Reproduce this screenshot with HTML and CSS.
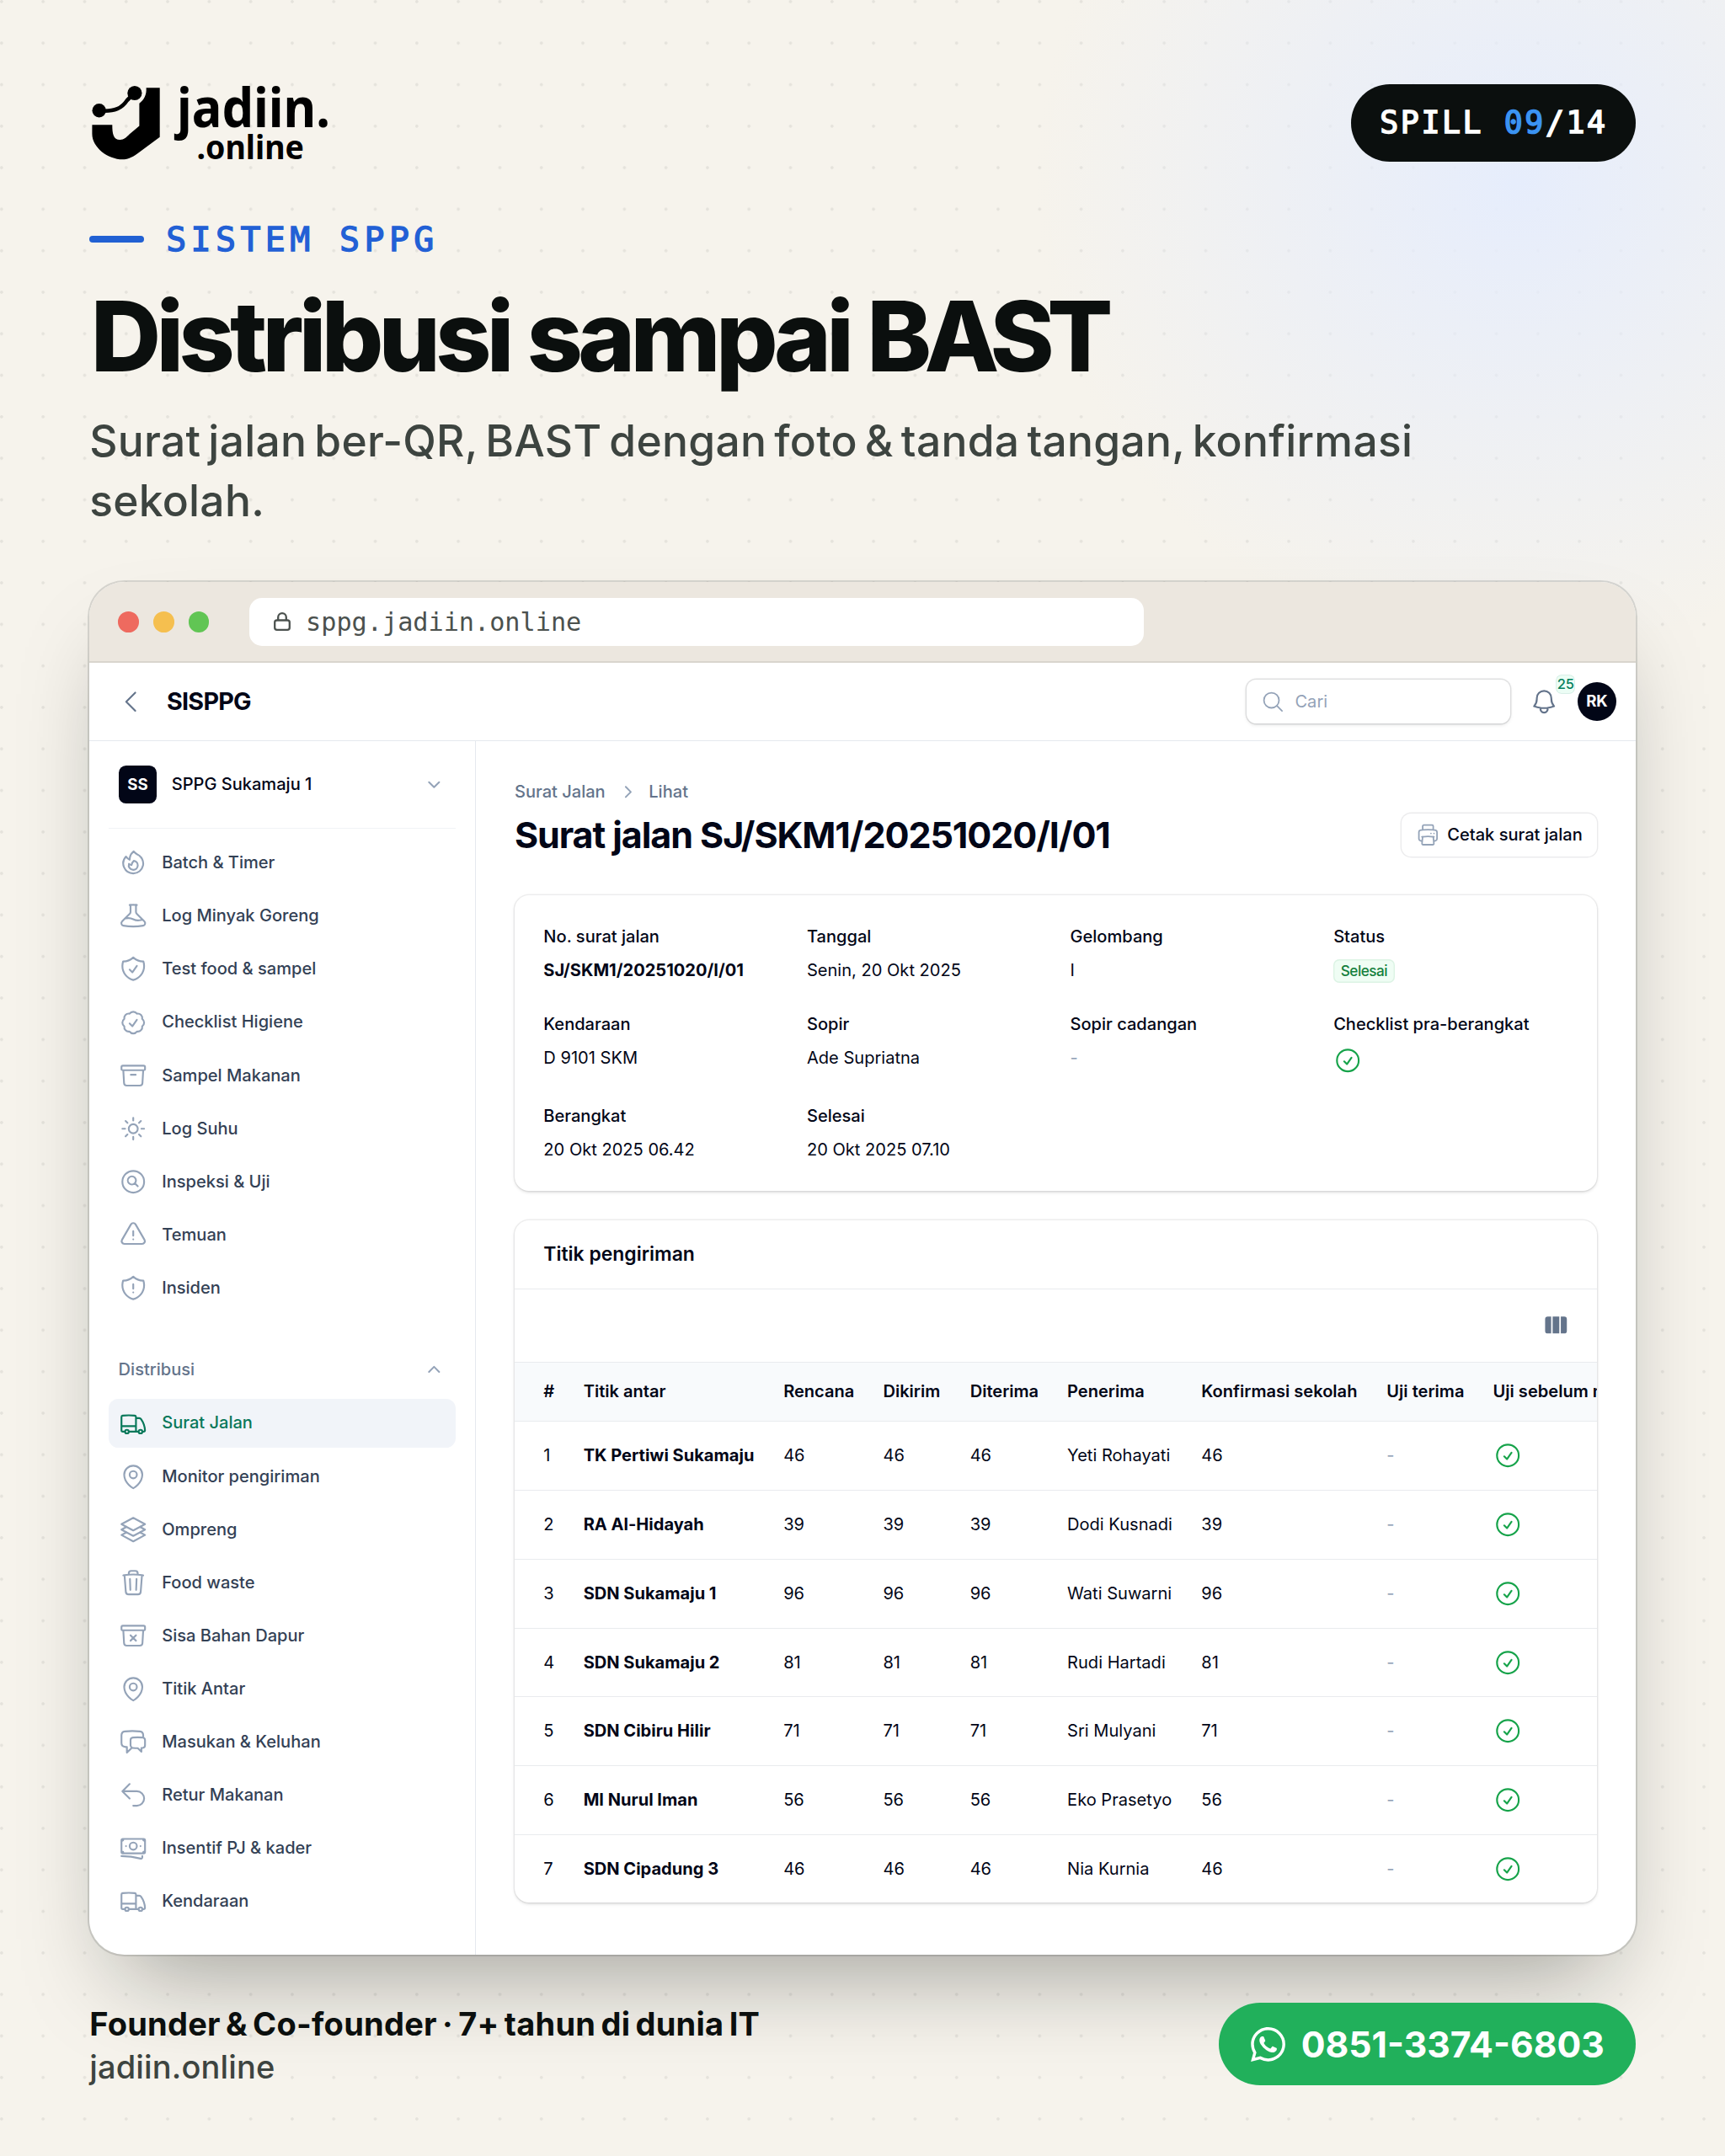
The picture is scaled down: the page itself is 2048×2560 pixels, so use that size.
FILE: index.html
```html
<!DOCTYPE html>
<html lang="id">
<head>
<meta charset="utf-8">
<title>Distribusi sampai BAST – jadiin.online</title>
<link rel="stylesheet" href="styles.css">
</head>
<body>
<svg class="sprite" aria-hidden="true">
  <symbol id="fire" viewBox="0 0 24 24"><path d="M15.362 5.214A8.252 8.252 0 0 1 12 21 8.25 8.25 0 0 1 6.038 7.047 8.287 8.287 0 0 0 9 9.601a8.983 8.983 0 0 1 3.361-6.867 8.21 8.21 0 0 0 3 2.48Z"/><path d="M12 18a3.75 3.75 0 0 0 .495-7.468 5.99 5.99 0 0 0-1.925 3.547 5.975 5.975 0 0 1-2.133-1.001A3.75 3.75 0 0 0 12 18Z"/></symbol>
  <symbol id="beaker" viewBox="0 0 24 24"><path d="M9.75 3.104v5.714a2.25 2.25 0 0 1-.659 1.591L5 14.5M9.75 3.104c-.251.023-.501.05-.75.082m.75-.082a24.301 24.301 0 0 1 4.5 0m0 0v5.714c0 .597.237 1.17.659 1.591L19.8 15.3M14.25 3.104c.251.023.501.05.75.082M19.8 15.3l-1.57.393A9.065 9.065 0 0 1 12 15a9.065 9.065 0 0 0-6.23-.693L5 14.5m14.8.8 1.402 1.402c1.232 1.232.65 3.318-1.067 3.611A48.309 48.309 0 0 1 12 21c-2.773 0-5.491-.235-8.135-.687-1.718-.293-2.3-2.379-1.067-3.61L5 14.5"/></symbol>
  <symbol id="shield-check" viewBox="0 0 24 24"><path d="M9 12.75 11.25 15 15 9.75m-3-7.036A11.959 11.959 0 0 1 3.598 6 11.99 11.99 0 0 0 3 9.749c0 5.592 3.824 10.29 9 11.623 5.176-1.332 9-6.03 9-11.622 0-1.31-.21-2.571-.598-3.751h-.152c-3.196 0-6.1-1.248-8.25-3.285Z"/></symbol>
  <symbol id="check-badge" viewBox="0 0 24 24"><path d="M9 12.75 11.25 15 15 9.75M21 12c0 1.268-.63 2.39-1.593 3.068a3.745 3.745 0 0 1-1.043 3.296 3.745 3.745 0 0 1-3.296 1.043A3.745 3.745 0 0 1 12 21c-1.268 0-2.39-.63-3.068-1.593a3.746 3.746 0 0 1-3.296-1.043 3.745 3.745 0 0 1-1.043-3.296A3.745 3.745 0 0 1 3 12c0-1.268.63-2.39 1.593-3.068a3.745 3.745 0 0 1 1.043-3.296 3.746 3.746 0 0 1 3.296-1.043A3.746 3.746 0 0 1 12 3c1.268 0 2.39.63 3.068 1.593a3.746 3.746 0 0 1 3.296 1.043 3.746 3.746 0 0 1 1.043 3.296A3.745 3.745 0 0 1 21 12Z"/></symbol>
  <symbol id="archive" viewBox="0 0 24 24"><path d="m20.25 7.5-.625 10.632a2.25 2.25 0 0 1-2.247 2.118H6.622a2.25 2.25 0 0 1-2.247-2.118L3.75 7.5M10 11.25h4M3.375 7.5h17.25c.621 0 1.125-.504 1.125-1.125v-1.5c0-.621-.504-1.125-1.125-1.125H3.375c-.621 0-1.125.504-1.125 1.125v1.5c0 .621.504 1.125 1.125 1.125Z"/></symbol>
  <symbol id="archive-x" viewBox="0 0 24 24"><path d="m20.25 7.5-.625 10.632a2.25 2.25 0 0 1-2.247 2.118H6.622a2.25 2.25 0 0 1-2.247-2.118L3.75 7.5M9.75 11.625l4.5 4.5m0-4.5-4.5 4.5M3.375 7.5h17.25c.621 0 1.125-.504 1.125-1.125v-1.5c0-.621-.504-1.125-1.125-1.125H3.375c-.621 0-1.125.504-1.125 1.125v1.5c0 .621.504 1.125 1.125 1.125Z"/></symbol>
  <symbol id="sun" viewBox="0 0 24 24"><path d="M12 3v2.25m6.364.386-1.591 1.591M21 12h-2.25m-.386 6.364-1.591-1.591M12 18.75V21m-4.773-4.227-1.591 1.591M5.25 12H3m4.227-4.773L5.636 5.636M15.75 12a3.75 3.75 0 1 1-7.5 0 3.75 3.75 0 0 1 7.5 0Z"/></symbol>
  <symbol id="search-circle" viewBox="0 0 24 24"><path d="m15.75 15.75-2.489-2.489m0 0a3.375 3.375 0 1 0-4.773-4.773 3.375 3.375 0 0 0 4.774 4.774ZM21 12a9 9 0 1 1-18 0 9 9 0 0 1 18 0Z"/></symbol>
  <symbol id="triangle" viewBox="0 0 24 24"><path d="M12 9v3.75m-9.303 3.376c-.866 1.5.217 3.374 1.948 3.374h14.71c1.73 0 2.813-1.874 1.948-3.374L13.949 3.378c-.866-1.5-3.032-1.5-3.898 0L2.697 16.126ZM12 15.75h.007v.008H12v-.008Z"/></symbol>
  <symbol id="shield-alert" viewBox="0 0 24 24"><path d="M12 9v3.75m0-10.036A11.959 11.959 0 0 1 3.598 6 11.99 11.99 0 0 0 3 9.75c0 5.592 3.824 10.29 9 11.622 5.176-1.332 9-6.03 9-11.622 0-1.31-.21-2.571-.598-3.751h-.152c-3.196 0-6.1-1.249-8.25-3.286Zm0 13.036h.008v.008H12v-.008Z"/></symbol>
  <symbol id="truck" viewBox="0 0 24 24"><path d="M8.25 18.75a1.5 1.5 0 0 1-3 0m3 0a1.5 1.5 0 0 0-3 0m3 0h6m-9 0H3.375a1.125 1.125 0 0 1-1.125-1.125V14.25m17.25 4.5a1.5 1.5 0 0 1-3 0m3 0a1.5 1.5 0 0 0-3 0m3 0h1.125c.621 0 1.129-.504 1.09-1.124a17.902 17.902 0 0 0-3.213-9.193 2.056 2.056 0 0 0-1.58-.86H14.25M16.5 18.75h-2.25m0-11.177v-.958c0-.568-.422-1.048-.987-1.106a48.554 48.554 0 0 0-10.026 0 1.106 1.106 0 0 0-.987 1.106v7.635m12-6.677v6.677m0 4.5v-4.5m0 0h-12"/></symbol>
  <symbol id="pin" viewBox="0 0 24 24"><path d="M15 10.5a3 3 0 1 1-6 0 3 3 0 0 1 6 0Z"/><path d="M19.5 10.5c0 7.142-7.5 11.25-7.5 11.25S4.5 17.642 4.5 10.5a7.5 7.5 0 1 1 15 0Z"/></symbol>
  <symbol id="stack" viewBox="0 0 24 24"><path d="M6.429 9.75 2.25 12l4.179 2.25m0-4.5 5.571 3 5.571-3m-11.142 0L2.25 7.5 12 2.25l9.75 5.25-4.179 2.25m0 0L21.75 12l-4.179 2.25m0 0 4.179 2.25L12 21.75 2.25 16.5l4.179-2.25m11.142 0-5.571 3-5.571-3"/></symbol>
  <symbol id="trash" viewBox="0 0 24 24"><path d="m14.74 9-.346 9m-4.788 0L9.26 9m9.968-3.21c.342.052.682.107 1.022.166m-1.022-.165L18.16 19.673a2.25 2.25 0 0 1-2.244 2.077H8.084a2.25 2.25 0 0 1-2.244-2.077L4.772 5.79m14.456 0a48.108 48.108 0 0 0-3.478-.397m-12 .562c.34-.059.68-.114 1.022-.165m0 0a48.11 48.11 0 0 1 3.478-.397m7.5 0v-.916c0-1.18-.91-2.164-2.09-2.201a51.964 51.964 0 0 0-3.32 0c-1.18.037-2.09 1.022-2.09 2.201v.916m7.5 0a48.667 48.667 0 0 0-7.5 0"/></symbol>
  <symbol id="chat" viewBox="0 0 24 24"><path d="M20.25 8.511c.884.284 1.5 1.128 1.5 2.097v4.286c0 1.136-.847 2.1-1.98 2.193-.34.027-.68.052-1.02.072v3.091l-3-3c-1.354 0-2.694-.055-4.02-.163a2.115 2.115 0 0 1-.825-.242m9.345-8.334a2.126 2.126 0 0 0-.476-.095 48.64 48.64 0 0 0-8.048 0c-1.131.094-1.976 1.057-1.976 2.192v4.286c0 .837.46 1.58 1.155 1.951m9.345-8.334V6.637c0-1.621-1.152-3.026-2.76-3.235A48.455 48.455 0 0 0 11.25 3c-2.115 0-4.198.137-6.24.402-1.608.209-2.76 1.614-2.76 3.235v6.226c0 1.621 1.152 3.026 2.76 3.235.577.075 1.157.14 1.74.194V21l4.155-4.155"/></symbol>
  <symbol id="return" viewBox="0 0 24 24"><path d="M9 15 3 9m0 0 6-6M3 9h12a6 6 0 0 1 0 12h-3"/></symbol>
  <symbol id="cash" viewBox="0 0 24 24"><path d="M2.25 18.75a60.07 60.07 0 0 1 15.797 2.101c.727.198 1.453-.342 1.453-1.096V18.75M3.75 4.5v.75A.75.75 0 0 1 3 6h-.75m0 0v-.375c0-.621.504-1.125 1.125-1.125H20.25M2.25 6v9m18-10.5v.75c0 .414.336.75.75.75h.75m-1.5-1.5h.375c.621 0 1.125.504 1.125 1.125v9.75c0 .621-.504 1.125-1.125 1.125h-.375m1.5-1.5H21a.75.75 0 0 0-.75.75v.75m0 0H3.75m0 0h-.375a1.125 1.125 0 0 1-1.125-1.125V15m1.5 1.5v-.75A.75.75 0 0 0 3 15h-.75M15 10.5a3 3 0 1 1-6 0 3 3 0 0 1 6 0Zm3 0h.008v.008H18V10.5Zm-12 0h.008v.008H6V10.5Z"/></symbol>
  <symbol id="printer" viewBox="0 0 24 24"><path d="M6.72 13.829c-.24.03-.48.062-.72.096m.72-.096a42.415 42.415 0 0 1 10.56 0m-10.56 0L6.34 18m10.94-4.171c.24.03.48.062.72.096m-.72-.096L17.66 18m0 0 .229 2.523a1.125 1.125 0 0 1-1.12 1.227H7.231c-.662 0-1.18-.568-1.12-1.227L6.34 18m11.318 0h1.091A2.25 2.25 0 0 0 21 15.75V9.456c0-1.081-.768-2.015-1.837-2.175a48.055 48.055 0 0 0-1.913-.247M6.34 18H5.25A2.25 2.25 0 0 1 3 15.75V9.456c0-1.081.768-2.015 1.837-2.175a48.041 48.041 0 0 1 1.913-.247m10.5 0a48.536 48.536 0 0 0-10.5 0m10.5 0V3.375c0-.621-.504-1.125-1.125-1.125h-8.25c-.621 0-1.125.504-1.125 1.125v3.659M18 10.5h.008v.008H18V10.5Zm-3 0h.008v.008H15V10.5Z"/></symbol>
  <symbol id="check" viewBox="0 0 24 24"><path d="M9 12.75 11.25 15 15 9.75M21 12a9 9 0 1 1-18 0 9 9 0 0 1 18 0Z"/></symbol>
  <symbol id="search" viewBox="0 0 24 24"><path d="m21 21-5.197-5.197m0 0A7.5 7.5 0 1 0 5.196 5.196a7.5 7.5 0 0 0 10.607 10.607Z"/></symbol>
  <symbol id="bell" viewBox="0 0 24 24"><path d="M14.857 17.082a23.848 23.848 0 0 0 5.454-1.31A8.967 8.967 0 0 1 18 9.75V9A6 6 0 0 0 6 9v.75a8.967 8.967 0 0 1-2.312 6.022c1.733.64 3.56 1.085 5.455 1.31m5.714 0a24.255 24.255 0 0 1-5.714 0m5.714 0a3 3 0 1 1-5.714 0"/></symbol>
  <symbol id="back" viewBox="0 0 24 24"><path d="M15.75 19.5 8.25 12l7.5-7.5"/></symbol>
  <symbol id="chev-down" viewBox="0 0 20 20"><path d="m5.8 8.2 4.2 4.2 4.2-4.2"/></symbol>
  <symbol id="chev-up" viewBox="0 0 20 20"><path d="m5.8 11.8 4.2-4.2 4.2 4.2"/></symbol>
  <symbol id="chev-right" viewBox="0 0 20 20"><path d="m9 5.8 4.2 4.2L9 14.2"/></symbol>
</svg>

<main class="poster">
  <header class="brand-row">
    <svg class="brand" viewBox="106 100 290 92" role="img" aria-label="jadiin.online">
      <path d="M109.4 148.3H133.3C133.3 159 134.500 166 142.500 166C147 166 150.500 162.500 153.500 159.500L165.400 149.500V122.800C171 118.500 174.300 112.500 173.600 104.300H189.700V162.800L163 182.500C156 187.500 151 189.300 145.500 189.300C128 189.300 109.400 175 109.400 159Z"/>
      <circle cx="159.900" cy="110.500" r="8.600"/><circle cx="117.700" cy="131.300" r="8.200"/>
      <path class="brand-link" d="M118 131.500C137 133 145 128 151 119L158 112"/>
      <text class="brand-name" x="210" y="151" textLength="182" lengthAdjust="spacingAndGlyphs">jadiin.</text>
      <text class="brand-tld" x="233.500" y="189.300" textLength="127.500" lengthAdjust="spacingAndGlyphs">.online</text>
    </svg>
    <div class="counter">SPILL <span class="counter-now">09</span>/14</div>
  </header>
  <div class="eyebrow">SISTEM SPPG</div>
  <h1 class="title">Distribusi sampai <span class="title-caps">BAST</span></h1>
  <p class="lead">Surat jalan ber-QR, BAST dengan foto &amp; tanda tangan, konfirmasi sekolah.</p>

  <section class="browser">
    <div class="chrome">
      <i class="light light-red"></i><i class="light light-amber"></i><i class="light light-green"></i>
      <div class="address">
        <svg class="lock" viewBox="0 0 20 22"><rect x="1.200" y="9.500" width="17.600" height="11.300" rx="2.600"/><path d="M5.200 9.500V6a4.800 4.800 0 0 1 9.600 0v3.500"/></svg>
        <span>sppg.jadiin.online</span>
      </div>
    </div>
    <div class="app">
      <div class="topbar">
        <svg class="icon icon-mid"><use href="#back"/></svg>
        <strong class="product">SISPPG</strong>
        <div class="search"><svg class="icon icon-sm"><use href="#search"/></svg>Cari</div>
        <div class="bell"><svg class="icon icon-mid"><use href="#bell"/></svg><span class="bell-count">25</span></div>
        <div class="avatar">RK</div>
      </div>
      <div class="body">
        <aside class="sidebar">
          <div class="tenant"><span class="tenant-logo">SS</span>SPPG Sukamaju 1<svg class="icon icon-sm chev push"><use href="#chev-down"/></svg></div>
          <ul class="nav">
            <li class="nav-item"><svg class="icon"><use href="#fire"/></svg>Batch &amp; Timer</li>
            <li class="nav-item"><svg class="icon"><use href="#beaker"/></svg>Log Minyak Goreng</li>
            <li class="nav-item"><svg class="icon"><use href="#shield-check"/></svg>Test food &amp; sampel</li>
            <li class="nav-item"><svg class="icon"><use href="#check-badge"/></svg>Checklist Higiene</li>
            <li class="nav-item"><svg class="icon"><use href="#archive"/></svg>Sampel Makanan</li>
            <li class="nav-item"><svg class="icon"><use href="#sun"/></svg>Log Suhu</li>
            <li class="nav-item"><svg class="icon"><use href="#search-circle"/></svg>Inspeksi &amp; Uji</li>
            <li class="nav-item"><svg class="icon"><use href="#triangle"/></svg>Temuan</li>
            <li class="nav-item"><svg class="icon"><use href="#shield-alert"/></svg>Insiden</li>
          </ul>
          <div class="nav-group">Distribusi<svg class="icon icon-sm chev push"><use href="#chev-up"/></svg></div>
          <ul class="nav">
            <li class="nav-item nav-active"><svg class="icon"><use href="#truck"/></svg>Surat Jalan</li>
            <li class="nav-item"><svg class="icon"><use href="#pin"/></svg>Monitor pengiriman</li>
            <li class="nav-item"><svg class="icon"><use href="#stack"/></svg>Ompreng</li>
            <li class="nav-item"><svg class="icon"><use href="#trash"/></svg>Food waste</li>
            <li class="nav-item"><svg class="icon"><use href="#archive-x"/></svg>Sisa Bahan Dapur</li>
            <li class="nav-item"><svg class="icon"><use href="#pin"/></svg>Titik Antar</li>
            <li class="nav-item"><svg class="icon"><use href="#chat"/></svg>Masukan &amp; Keluhan</li>
            <li class="nav-item"><svg class="icon"><use href="#return"/></svg>Retur Makanan</li>
            <li class="nav-item"><svg class="icon"><use href="#cash"/></svg>Insentif PJ &amp; kader</li>
            <li class="nav-item"><svg class="icon"><use href="#truck"/></svg>Kendaraan</li>
          </ul>
        </aside>
        <div class="content">
          <div class="crumbs">Surat Jalan<svg class="icon icon-sm chev"><use href="#chev-right"/></svg>Lihat</div>
          <div class="heading">
            <h2>Surat jalan SJ/SKM1/20251020/I/01</h2>
            <div class="button"><svg class="icon icon-sm"><use href="#printer"/></svg>Cetak surat jalan</div>
          </div>
          <dl class="card details">
            <div><dt>No. surat jalan</dt><dd class="strong">SJ/SKM1/20251020/I/01</dd></div>
            <div><dt>Tanggal</dt><dd>Senin, 20 Okt 2025</dd></div>
            <div><dt>Gelombang</dt><dd>I</dd></div>
            <div><dt>Status</dt><dd><span class="badge">Selesai</span></dd></div>
            <div><dt>Kendaraan</dt><dd>D 9101 SKM</dd></div>
            <div><dt>Sopir</dt><dd>Ade Supriatna</dd></div>
            <div><dt>Sopir cadangan</dt><dd class="empty">-</dd></div>
            <div><dt>Checklist pra-berangkat</dt><dd><svg class="icon ok"><use href="#check"/></svg></dd></div>
            <div><dt>Berangkat</dt><dd>20 Okt 2025 06.42</dd></div>
            <div><dt>Selesai</dt><dd>20 Okt 2025 07.10</dd></div>
          </dl>
          <section class="card deliveries">
            <h3>Titik pengiriman</h3>
            <div class="tools"><svg class="columns" viewBox="0 0 20 20"><path d="M3.250 3H6v14H3.250A2.250 2.250 0 0 1 1 14.750v-9.500A2.250 2.250 0 0 1 3.250 3ZM7.250 3h5.500v14h-5.500ZM14 3h2.750A2.250 2.250 0 0 1 19 5.250v9.500A2.250 2.250 0 0 1 16.750 17H14Z"/></svg></div>
            <table>
              <colgroup><col class="c-no"><col class="c-name"><col class="c-plan"><col class="c-sent"><col class="c-got"><col class="c-by"><col class="c-conf"><col class="c-test"><col class="c-pre"></colgroup>
              <thead><tr><th>#</th><th>Titik antar</th><th>Rencana</th><th>Dikirim</th><th>Diterima</th><th>Penerima</th><th>Konfirmasi sekolah</th><th>Uji terima</th><th>Uji sebelum makan</th></tr></thead>
              <tbody>
                <tr><td>1</td><td class="strong">TK Pertiwi Sukamaju</td><td>46</td><td>46</td><td>46</td><td>Yeti Rohayati</td><td>46</td><td class="empty">-</td><td><svg class="icon ok"><use href="#check"/></svg></td></tr>
                <tr><td>2</td><td class="strong">RA Al-Hidayah</td><td>39</td><td>39</td><td>39</td><td>Dodi Kusnadi</td><td>39</td><td class="empty">-</td><td><svg class="icon ok"><use href="#check"/></svg></td></tr>
                <tr><td>3</td><td class="strong">SDN Sukamaju 1</td><td>96</td><td>96</td><td>96</td><td>Wati Suwarni</td><td>96</td><td class="empty">-</td><td><svg class="icon ok"><use href="#check"/></svg></td></tr>
                <tr><td>4</td><td class="strong">SDN Sukamaju 2</td><td>81</td><td>81</td><td>81</td><td>Rudi Hartadi</td><td>81</td><td class="empty">-</td><td><svg class="icon ok"><use href="#check"/></svg></td></tr>
                <tr><td>5</td><td class="strong">SDN Cibiru Hilir</td><td>71</td><td>71</td><td>71</td><td>Sri Mulyani</td><td>71</td><td class="empty">-</td><td><svg class="icon ok"><use href="#check"/></svg></td></tr>
                <tr><td>6</td><td class="strong">MI Nurul Iman</td><td>56</td><td>56</td><td>56</td><td>Eko Prasetyo</td><td>56</td><td class="empty">-</td><td><svg class="icon ok"><use href="#check"/></svg></td></tr>
                <tr><td>7</td><td class="strong">SDN Cipadung 3</td><td>46</td><td>46</td><td>46</td><td>Nia Kurnia</td><td>46</td><td class="empty">-</td><td><svg class="icon ok"><use href="#check"/></svg></td></tr>
              </tbody>
            </table>
          </section>
        </div>
      </div>
    </div>
  </section>

  <footer class="footer">
    <div class="credit"><div class="credit-role">Founder &amp; Co-founder · 7+ tahun di dunia IT</div><div class="credit-site">jadiin.online</div></div>
    <div class="phone"><svg viewBox="0 0 24 24"><path d="M17.472 14.382c-.297-.149-1.758-.867-2.030-.967-.273-.099-.471-.148-.670.150-.197.297-.767.966-.940 1.164-.173.199-.347.223-.644.075-.297-.150-1.255-.463-2.390-1.475-.883-.788-1.480-1.761-1.653-2.059-.173-.297-.018-.458.130-.606.134-.133.298-.347.446-.520.149-.174.198-.298.298-.497.099-.198.050-.371-.025-.520-.075-.149-.669-1.612-.916-2.207-.242-.579-.487-.500-.669-.510-.173-.008-.371-.010-.570-.010-.198 0-.520.074-.792.372-.272.297-1.040 1.016-1.040 2.479 0 1.462 1.065 2.875 1.213 3.074.149.198 2.096 3.200 5.077 4.487.709.306 1.262.489 1.694.625.712.227 1.360.195 1.871.118.571-.085 1.758-.719 2.006-1.413.248-.694.248-1.289.173-1.413-.074-.124-.272-.198-.570-.347m-5.421 7.403h-.004a9.870 9.870 0 0 1-5.031-1.378l-.361-.214-3.741.982.998-3.648-.235-.374a9.860 9.860 0 0 1-1.510-5.260c.001-5.450 4.436-9.884 9.888-9.884 2.640 0 5.122 1.030 6.988 2.898a9.825 9.825 0 0 1 2.893 6.994c-.003 5.450-4.437 9.884-9.885 9.884m8.413-18.297A11.815 11.815 0 0 0 12.050 0C5.495 0 .160 5.335.157 11.892c0 2.096.547 4.142 1.588 5.945L.057 24l6.305-1.654a11.882 11.882 0 0 0 5.683 1.448h.005c6.554 0 11.890-5.335 11.893-11.893a11.821 11.821 0 0 0-3.480-8.413Z"/></svg>0851-3374-6803</div>
  </footer>
</main>
</body>
</html>
```
FILE: styles.css
```css
/* 1rem = 10 units of the app shown in the browser window */
html { font-size: 14.34px; }
* { box-sizing: border-box; margin: 0; padding: 0; }
body { font-family: Inter, "Liberation Sans", sans-serif; background: #f6f3ec; color: #0b0f0e; }
.sprite { display: none; }

.poster {
  width: 2048px;
  height: 2560px;
  overflow: hidden;
  padding: 100px 106.2px 0;
  background:
    radial-gradient(circle 570px at 1800px 215px, #e6edfc 0%, rgba(230, 237, 252, 0) 100%),
    radial-gradient(circle at 1.9px 1.9px, rgba(11, 15, 14, .075) 1.4px, transparent 2.2px) 0 0 / 49.304px 49.304px,
    #f6f3ec;
}

.brand-row { display: flex; justify-content: space-between; align-items: center; height: 92px; }
.brand { width: 290px; height: 92px; fill: #000; overflow: visible; }
.brand-link { fill: none; stroke: #000; stroke-width: 4.600; }
.brand-name { font: 700 64px "Noto Sans", sans-serif; }
.brand-tld { font: 700 38.500px "Noto Sans", sans-serif; }
.counter {
  height: 92px;
  padding: 0 33.200px 0 34px;
  border-radius: 46px;
  background: #0b0f0e;
  color: #fff;
  font: 400 36.500px/92px "DejaVu Sans Mono", monospace;
  letter-spacing: 2.600px;
  -webkit-text-stroke: 1.600px currentColor;
  white-space: pre;
}
.counter-now { color: #3b93f2; -webkit-text-stroke-color: #3b93f2; }

.eyebrow {
  display: flex;
  align-items: center;
  gap: 26.500px;
  height: 54px;
  margin-top: 65px;
  color: #2260d5;
  font: 400 39.800px/54px "DejaVu Sans Mono", monospace;
  letter-spacing: 5.450px;
  -webkit-text-stroke: 1.400px currentColor;
}
.eyebrow::before { content: ""; width: 64.500px; height: 7.600px; border-radius: 4px; background: #2160d3; }
.title { margin-top: 26px; padding-left: 1.500px; font-size: 115.500px; line-height: 124px; font-weight: 780; letter-spacing: -5.700px; word-spacing: 1.400px; white-space: nowrap; }
.title-caps { letter-spacing: -8.500px; }
.lead { width: 1660px; margin-top: 26.500px; font-size: 51.500px; line-height: 71px; font-weight: 500; letter-spacing: .290px; word-spacing: -5px; color: #3d4440; }

.browser {
  height: 1629.300px;
  margin-top: 61.900px;
  border-radius: 41.700px;
  overflow: hidden;
  background: #fff;
  box-shadow: 0 0 0 2px rgba(11, 15, 14, .13), 0 57px 114px -38px rgba(11, 15, 14, .37);
}
.chrome { display: flex; align-items: center; height: 96px; padding-left: 33.800px; background: #ece7df; border-bottom: 2px solid #d9d5cd; }
.light { width: 24.700px; height: 24.700px; margin-right: 17.200px; border-radius: 50%; }
.light-red { background: #ee6a5f; }
.light-amber { background: #f5bf4f; }
.light-green { background: #61c554; }
.address {
  display: flex;
  align-items: center;
  width: 1062px;
  height: 57px;
  margin-left: 30.300px;
  padding-left: 28.600px;
  border-radius: 15px;
  background: #fff;
  color: #4b514e;
  font: 400 30.200px/57px "DejaVu Sans Mono", monospace;
}
.lock { width: 20px; height: 22px; margin-right: 18.600px; fill: none; stroke: #4b514e; stroke-width: 2.300; }

.app { height: 1533.300px; padding-top: .500px; font-size: 1.4rem; line-height: 2rem; color: #020617; }
.icon { flex: none; width: 2.4rem; height: 2.4rem; fill: none; stroke: #94a3b8; stroke-width: 1.500; stroke-linecap: round; stroke-linejoin: round; }
.icon-mid { stroke: #64748b; }
.icon-sm { width: 2rem; height: 2rem; }
.chev { stroke-width: 1.400; }
.push { margin-left: auto; }

.topbar { display: flex; align-items: center; height: 6.4rem; padding: 0 1rem 0 2.2rem; border-bottom: .1rem solid #e5e9ee; }
.product { margin-left: 1.800rem; font-size: 2rem; letter-spacing: -.025em; }
.search {
  display: flex;
  align-items: center;
  gap: .8rem;
  width: 21.800rem;
  height: 3.600rem;
  margin-left: auto;
  padding-left: 1.200rem;
  border-radius: .8rem;
  color: #94a3b8;
  box-shadow: 0 0 0 .1rem rgba(2, 6, 23, .1), 0 .1rem .3rem rgba(0, 0, 0, .1);
}
.bell { position: relative; display: flex; margin-left: 1.600rem; }
.bell-count {
  position: absolute;
  left: 2.250rem;
  top: -.95rem;
  width: 1.500rem;
  height: 1.450rem;
  border-radius: .4rem;
  background: #ecfdf5;
  box-shadow: 0 0 0 .05rem rgba(5, 150, 105, .2);
  color: #04805d;
  font-size: 1.150rem;
  font-weight: 500;
  line-height: 1.450rem;
  letter-spacing: -.02em;
  text-align: center;
}
.avatar { width: 3.200rem; height: 3.200rem; margin: 0 .6rem 0 1.600rem; border-radius: 50%; background: #020617; color: #fff; font-size: 1.300rem; font-weight: 700; line-height: 3.200rem; text-align: center; }

.body { display: flex; height: calc(100% - 6.4rem); }
.sidebar { flex: none; width: 32rem; padding: 0 1.600rem; border-right: .1rem solid #e5e9ee; }
.tenant { display: flex; align-items: center; height: 7.300rem; padding: 0 .8rem; border-bottom: .1rem solid #f1f3f6; font-weight: 500; }
.tenant-logo { width: 3.200rem; height: 3.200rem; margin-right: 1.200rem; border-radius: .6rem; background: #020617; color: #fff; font-size: 1.300rem; font-weight: 700; line-height: 3.200rem; text-align: center; }
.nav { display: grid; gap: .4rem; list-style: none; }
.tenant + .nav { margin-top: .800rem; }
.nav-item { display: flex; align-items: center; gap: 1.200rem; height: 4rem; padding: 0 .8rem; border-radius: .8rem; color: #334155; font-weight: 500; }
.nav-active { background: #f1f4f9; color: #08785a; }
.nav-active .icon { stroke: #08785a; }
.nav-group { display: flex; align-items: center; height: 4rem; margin: 2.800rem 0 .4rem; padding: 0 .8rem; color: #64748b; font-weight: 500; }

.content { flex: 1; min-width: 0; padding: 3.200rem 3.200rem 0; }
.crumbs { display: flex; align-items: center; gap: .8rem; height: 2rem; color: #64748b; font-weight: 500; }
.heading { display: flex; align-items: center; justify-content: space-between; height: 3.600rem; margin: .8rem 0 3.200rem; }
.heading h2 { font-size: 3rem; line-height: 3.600rem; letter-spacing: -.025em; }
.button { display: flex; align-items: center; gap: .6rem; height: 3.600rem; padding: 0 1.200rem; border-radius: .8rem; font-weight: 500; box-shadow: 0 0 0 .1rem rgba(2, 6, 23, .08); }

.card { border-radius: 1.200rem; box-shadow: 0 0 0 .1rem rgba(2, 6, 23, .05), 0 .1rem .3rem rgba(0, 0, 0, .08), 0 .1rem .2rem rgba(0, 0, 0, .05); }
.details { display: grid; grid-template-columns: repeat(4, 19.400rem); grid-template-rows: 4.900rem 5.200rem 4.800rem; gap: 2.400rem; padding: 2.400rem; }
.details dt { margin-bottom: .8rem; font-weight: 500; white-space: nowrap; }
.details dd { display: flex; white-space: nowrap; }
.strong { font-weight: 700; }
.ok { display: block; stroke: #16a34a; }
.app .empty { color: #94a3b8; }
.badge { height: 1.950rem; margin-top: .120rem; padding: 0 .600rem; border-radius: .5rem; background: #effdf4; box-shadow: inset 0 0 0 .1rem #dcf3e4; color: #15803d; font-size: 1.200rem; font-weight: 500; line-height: 1.900rem; letter-spacing: -.03em; }

.deliveries { margin-top: 2.400rem; overflow: hidden; }
.deliveries h3 { height: 5.700rem; padding-left: 2.400rem; border-bottom: .1rem solid #e9ebee; font-size: 1.600rem; font-weight: 600; line-height: 5.600rem; }
.tools { display: flex; align-items: center; justify-content: flex-end; height: 6.100rem; padding-right: 2.400rem; border-bottom: .1rem solid #e9ebee; }
.columns { width: 2rem; height: 2rem; fill: #64748b; }
table { width: 95rem; table-layout: fixed; border-collapse: separate; border-spacing: 0; }
th, td { padding: 0 0 0 1.200rem; text-align: left; font-weight: 400; white-space: nowrap; border-bottom: .1rem solid #e9ebee; }
th { height: 4.900rem; background: #f8fafc; font-weight: 600; }
td { height: 5.700rem; }
td.strong { font-weight: 700; }
th:first-child, td:first-child { padding-left: 2.400rem; }
tr:last-child td { height: 5.600rem; border-bottom: 0; }
.c-no { width: 4.500rem; }
.c-name { width: 16.560rem; }
.c-plan { width: 8.250rem; }
.c-sent { width: 7.200rem; }
.c-got { width: 8.050rem; }
.c-by { width: 11.100rem; }
.c-conf { width: 15.350rem; }
.c-test { width: 8.800rem; }

.footer { display: flex; justify-content: space-between; align-items: center; height: 98.300px; margin-top: 57.300px; }
.credit { padding-top: 4.500px; font-size: 38px; line-height: 51px; }
.credit-role { font-weight: 700; letter-spacing: .250px; word-spacing: -3px; }
.credit-site { font-weight: 500; letter-spacing: .15px; color: #3d4440; }
.phone { display: flex; align-items: center; height: 98.300px; padding: 0 37px 0 38px; border-radius: 49.200px; background: #21b05b; color: #fff; font-size: 42.700px; font-weight: 700; }
.phone svg { width: 41px; height: 41px; margin-right: 19px; fill: #fff; }
```
